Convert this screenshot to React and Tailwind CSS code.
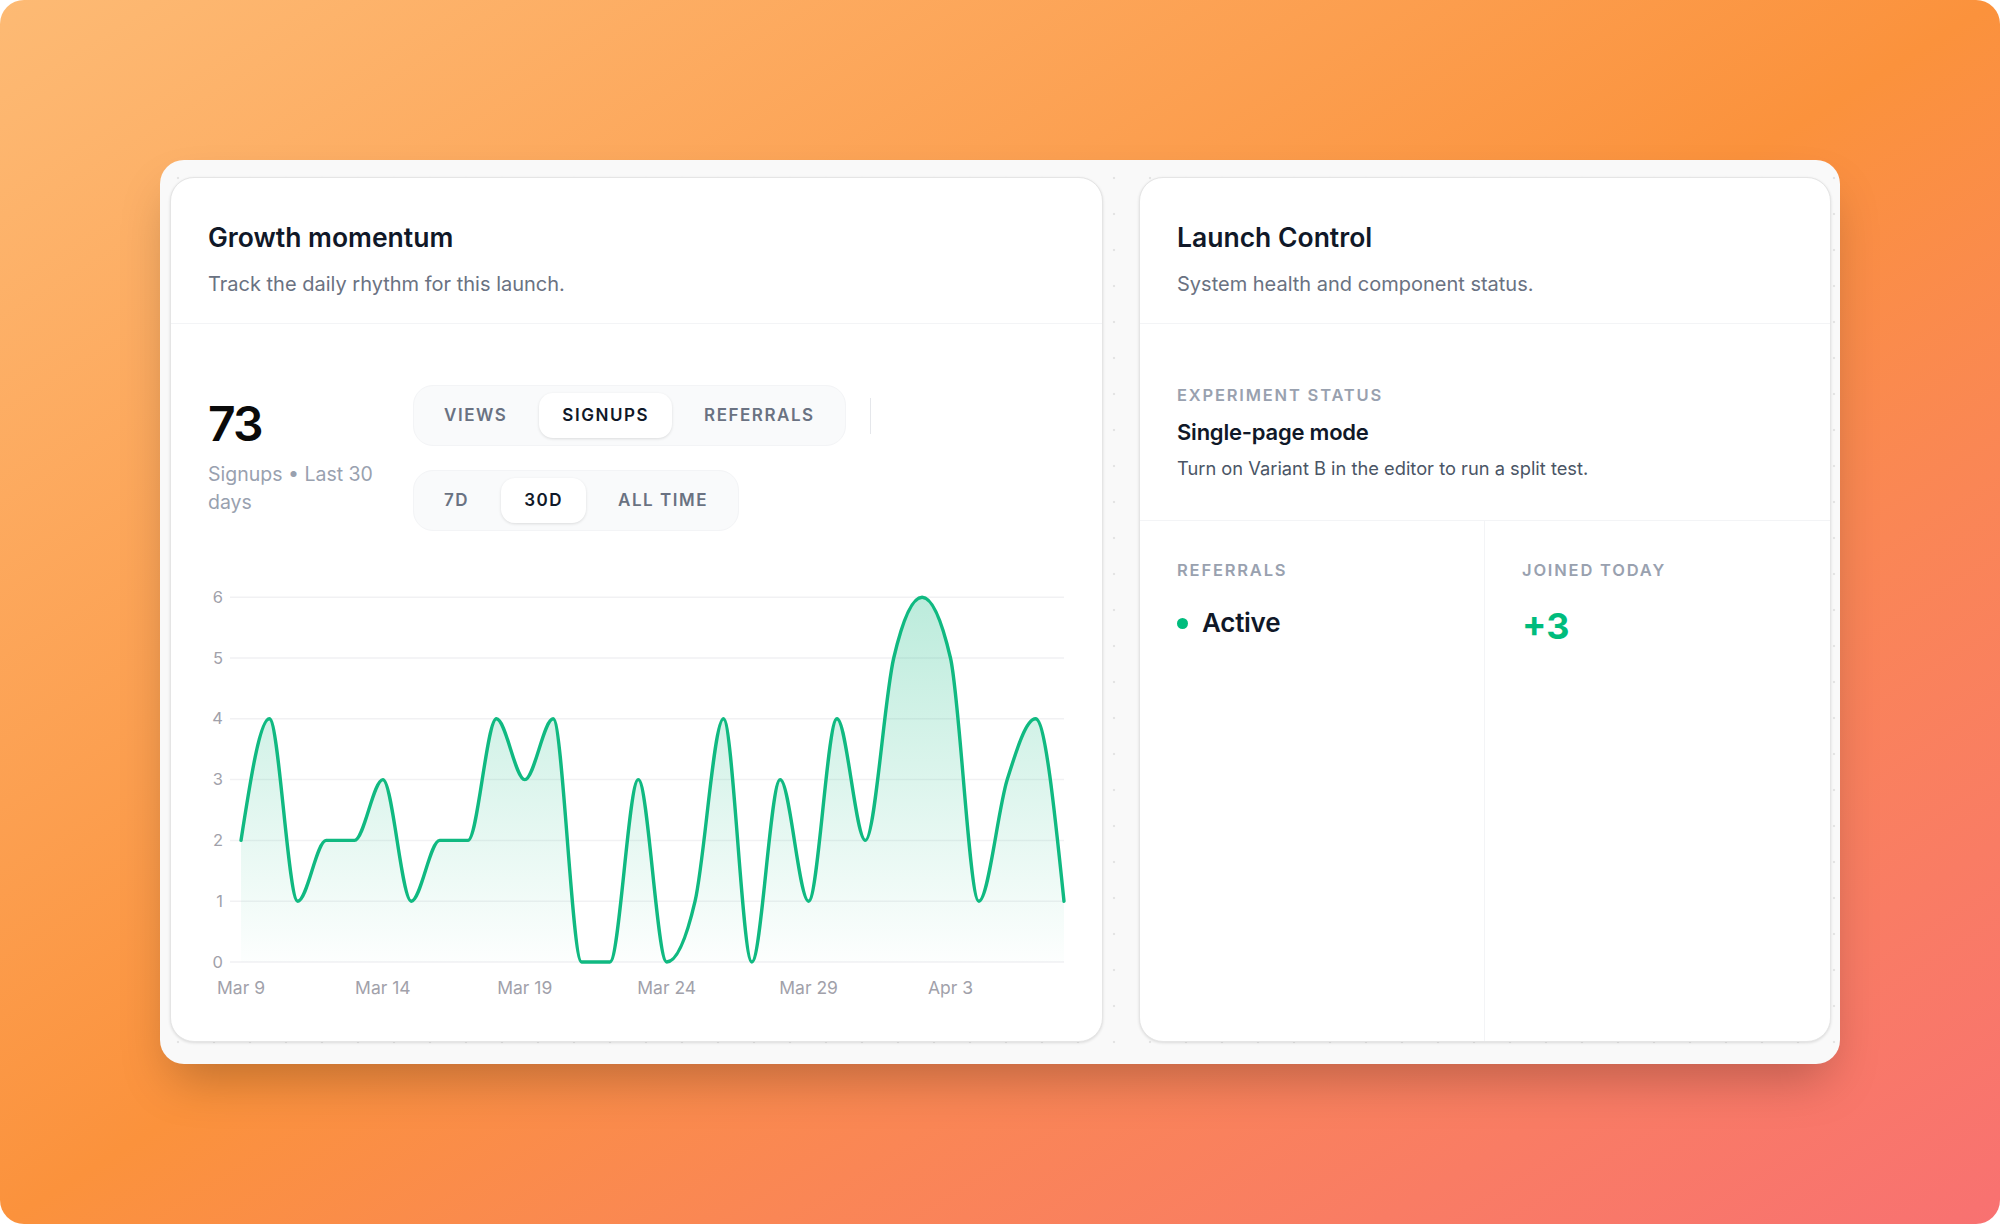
import React from "react";

const signups = [2, 4, 1, 2, 2, 3, 1, 2, 2, 4, 3, 4, 0, 0, 3, 0, 1, 4, 0, 3, 1, 4, 2, 5, 6, 5, 1, 3, 4, 1];
const xLabels = [
  { i: 0, label: "Mar 9" },
  { i: 5, label: "Mar 14" },
  { i: 10, label: "Mar 19" },
  { i: 15, label: "Mar 24" },
  { i: 20, label: "Mar 29" },
  { i: 25, label: "Apr 3" },
];

// chart geometry (svg px)
const W = 857;
const H = 440;
const GRID_X = 22;
const FIRST_X = 33;
const LAST_X = 856;
const ZERO_Y = 390;
const UNIT = 60.8;

const px = (i) => FIRST_X + ((LAST_X - FIRST_X) / (signups.length - 1)) * i;
const py = (v) => ZERO_Y - v * UNIT;

// same maths as d3 curveMonotoneX
function monotonePath(pts) {
  const n = pts.length;
  const h = pts[1][0] - pts[0][0];
  const sign = (v) => (v < 0 ? -1 : 1);
  const m = new Array(n).fill(0);
  for (let i = 1; i < n - 1; i++) {
    const s0 = (pts[i][1] - pts[i - 1][1]) / h;
    const s1 = (pts[i + 1][1] - pts[i][1]) / h;
    const p = (s0 + s1) / 2;
    m[i] = (sign(s0) + sign(s1)) * Math.min(Math.abs(s0), Math.abs(s1), 0.5 * Math.abs(p)) || 0;
  }
  m[0] = ((3 * (pts[1][1] - pts[0][1])) / h - m[1]) / 2;
  m[n - 1] = ((3 * (pts[n - 1][1] - pts[n - 2][1])) / h - m[n - 2]) / 2;
  const dx = h / 3;
  let d = `M${pts[0][0]},${pts[0][1]}`;
  for (let i = 0; i < n - 1; i++) {
    d += ` C${pts[i][0] + dx},${pts[i][1] + dx * m[i]} ${pts[i + 1][0] - dx},${pts[i + 1][1] - dx * m[i + 1]} ${pts[i + 1][0]},${pts[i + 1][1]}`;
  }
  return d;
}

const SignupsChart = () => {
  const pts = signups.map((v, i) => [px(i), py(v)]);
  const line = monotonePath(pts);
  const area = `${line} L${LAST_X},${ZERO_Y} L${FIRST_X},${ZERO_Y} Z`;

  return (
    <svg width={W} height={H} viewBox={`0 0 ${W} ${H}`} className="mt-[41px] block overflow-visible">
      <defs>
        <linearGradient id="signupFill" x1="0" y1="0" x2="0" y2="1">
          <stop offset="0%" stopColor="#10b981" stopOpacity="0.28" />
          <stop offset="100%" stopColor="#10b981" stopOpacity="0.01" />
        </linearGradient>
      </defs>
      {[0, 1, 2, 3, 4, 5, 6].map((v) => (
        <g key={v}>
          <line x1={GRID_X} x2={LAST_X} y1={py(v)} y2={py(v)} stroke="#f1f1f3" strokeWidth="1.5" />
          <text x="15" y={py(v) + 5.5} textAnchor="end" fontSize="16.5" fill="#a1a1aa">
            {v}
          </text>
        </g>
      ))}
      <path d={area} fill="url(#signupFill)" />
      <path d={line} fill="none" stroke="#10b981" strokeWidth="3.4" strokeLinejoin="round" strokeLinecap="round" />
      {xLabels.map((l) => (
        <text key={l.label} x={px(l.i)} y="422" textAnchor="middle" fontSize="17.5" fill="#a1a1aa">
          {l.label}
        </text>
      ))}
    </svg>
  );
};

const Segmented = ({ items, active }) => (
  <div className="flex gap-[9px] rounded-[20px] border border-gray-100 bg-gray-50 p-[7px]">
    {items.map((it) => (
      <button
        key={it}
        type="button"
        className={`h-[45px] rounded-[14px] px-[23px] text-[17px] font-semibold tracking-[0.09em] ${
          it === active ? "bg-white text-gray-900 shadow-[0_1px_3px_rgba(0,0,0,0.12)]" : "text-gray-500"
        }`}
      >
        {it}
      </button>
    ))}
  </div>
);

const CardHeader = ({ title, sub }) => (
  <header className="border-b border-gray-100 px-[37px] pt-[42px] pb-[25px]">
    <h2 className="text-[26.5px] leading-[34px] font-semibold text-gray-900">{title}</h2>
    <p className="mt-[16px] text-[20px] leading-[28px] text-gray-500">{sub}</p>
  </header>
);

const GrowthCard = () => (
  <section className="flex w-[933px] flex-col rounded-3xl border border-neutral-200 bg-white shadow-[0_1px_3px_rgba(0,0,0,0.12)]">
    <CardHeader title="Growth momentum" sub="Track the daily rhythm for this launch." />
    <div className="px-[37px] pt-[61px]">
      <div className="flex items-center gap-[30px]">
        <div className="w-[175px] shrink-0">
          <div className="text-[48px] leading-none font-semibold tracking-[-0.04em] text-neutral-950">73</div>
          <p className="mt-[12px] text-[19.5px] leading-[28px] text-gray-400">Signups • Last 30 days</p>
        </div>
        <div className="flex flex-wrap items-center gap-6">
          <Segmented items={["VIEWS", "SIGNUPS", "REFERRALS"]} active="SIGNUPS" />
          <div className="h-9 w-px bg-gray-200" />
          <Segmented items={["7D", "30D", "ALL TIME"]} active="30D" />
        </div>
      </div>
      <SignupsChart />
    </div>
  </section>
);

const Label = ({ children }) => (
  <p className="text-[16.5px] leading-6 font-semibold tracking-[0.11em] text-gray-400">{children}</p>
);

const LaunchCard = () => (
  <section className="flex flex-1 flex-col rounded-3xl border border-neutral-200 bg-white shadow-[0_1px_3px_rgba(0,0,0,0.12)]">
    <CardHeader title="Launch Control" sub="System health and component status." />
    <div className="border-b border-gray-100 px-[37px] pt-[59px] pb-[39px]">
      <Label>EXPERIMENT STATUS</Label>
      <h3 className="mt-[10px] text-[22px] leading-[30px] font-semibold tracking-[-0.01em] text-gray-900">Single-page mode</h3>
      <p className="mt-[8px] text-[18.3px] leading-[26px] text-gray-600">Turn on Variant B in the editor to run a split test.</p>
    </div>
    <div className="grid flex-1 grid-cols-2 divide-x divide-gray-100">
      <div className="px-[37px] pt-[37px]">
        <Label>REFERRALS</Label>
        <div className="mt-[24px] flex items-center gap-[14px]">
          <span className="h-[11px] w-[11px] rounded-full bg-emerald-500" />
          <span className="text-[26px] leading-[34px] font-semibold tracking-[-0.01em] text-gray-900">Active</span>
        </div>
      </div>
      <div className="px-[37px] pt-[37px]">
        <Label>JOINED TODAY</Label>
        <div className="mt-[24px] text-[36px] leading-[40px] font-bold text-emerald-500">+3</div>
      </div>
    </div>
  </section>
);

export default function App() {
  return (
    <div className="bg-white font-['Inter',sans-serif]">
      <div className="h-[1224px] w-full rounded-3xl bg-linear-to-br from-[#fdba74] via-[#fb923c] to-[#f87171] p-40">
        <div className="flex h-full gap-9 rounded-3xl bg-[#f9f9f9] bg-[radial-gradient(circle,#e4e4e4_1px,transparent_1.6px)] bg-[length:36px_36px] pt-[17px] pr-[9px] pb-[22px] pl-[10px] shadow-2xl">
          <GrowthCard />
          <LaunchCard />
        </div>
      </div>
    </div>
  );
}
